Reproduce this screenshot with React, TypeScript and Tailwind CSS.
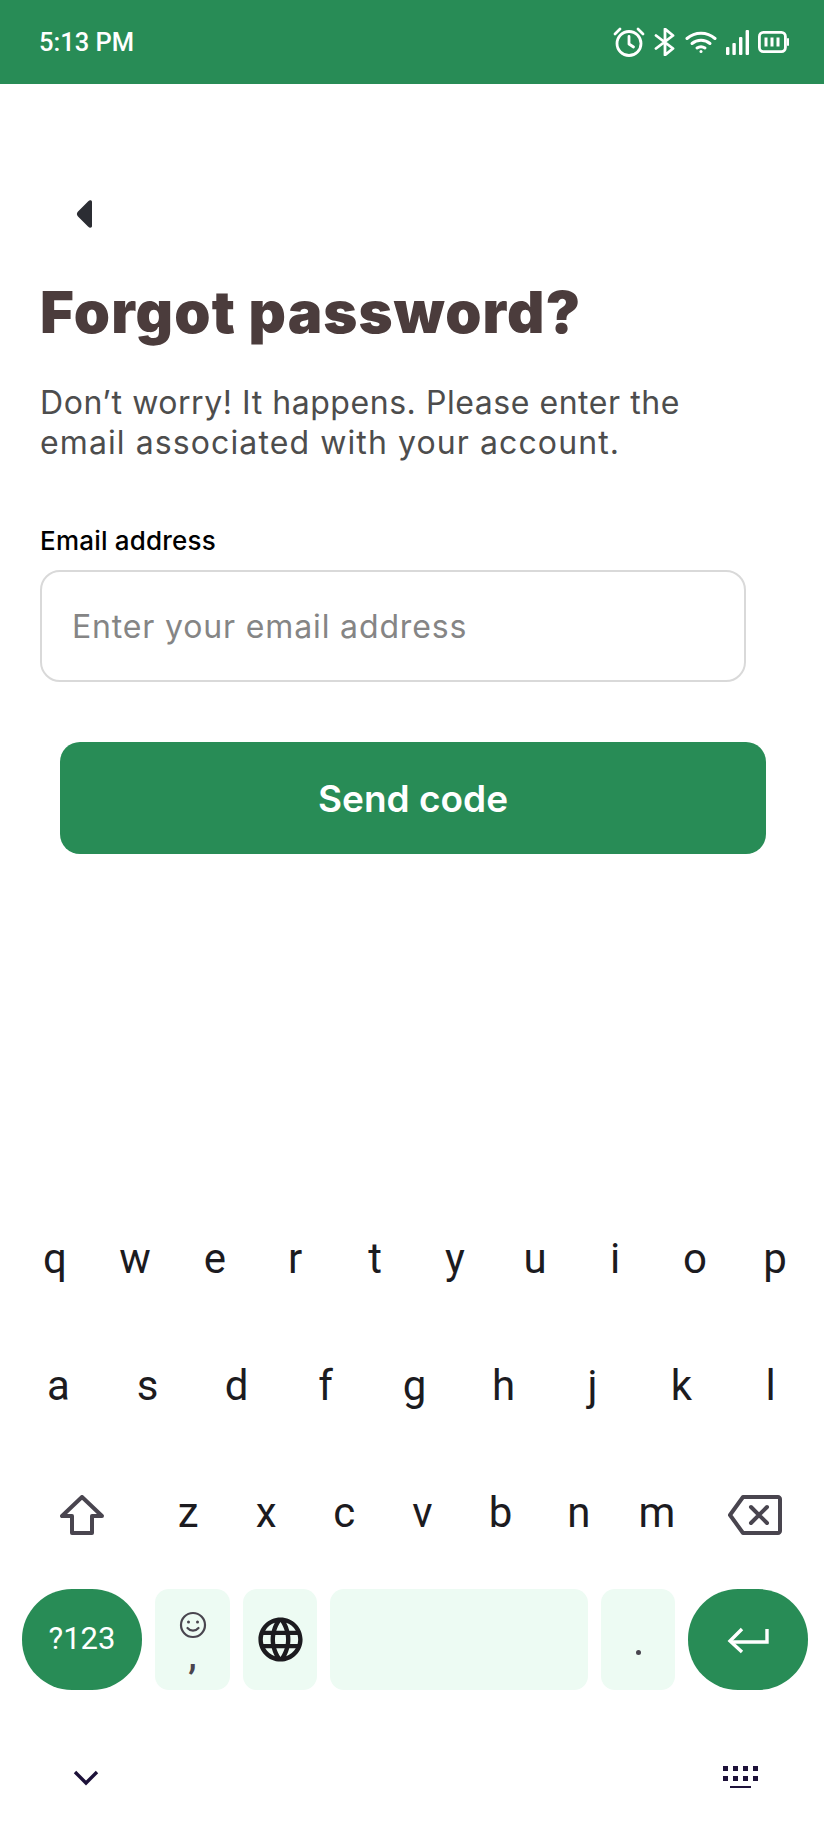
import React from "react";

const rowOne = ["q", "w", "e", "r", "t", "y", "u", "i", "o", "p"];
const rowTwo = ["a", "s", "d", "f", "g", "h", "j", "k", "l"];
const rowThree = ["z", "x", "c", "v", "b", "n", "m"];

const globePath =
  "M11.99 2C6.47 2 2 6.48 2 12s4.47 10 9.99 10C17.52 22 22 17.52 22 12S17.52 2 11.99 2zm6.93 6h-2.95c-.32-1.25-.78-2.45-1.38-3.56 1.84.63 3.37 1.91 4.33 3.56zM12 4.04c.83 1.2 1.48 2.53 1.91 3.96h-3.82c.43-1.43 1.08-2.76 1.91-3.96zM4.26 14C4.1 13.36 4 12.69 4 12s.1-1.36.26-2h3.38c-.08.66-.14 1.32-.14 2 0 .68.06 1.34.14 2H4.26zm.82 2h2.95c.32 1.25.78 2.45 1.38 3.56-1.84-.63-3.37-1.9-4.33-3.56zm2.95-8H5.08c.96-1.66 2.49-2.93 4.33-3.56C8.81 5.55 8.35 6.75 8.03 8zM12 19.96c-.83-1.2-1.48-2.53-1.91-3.96h3.82c-.43 1.43-1.08 2.76-1.91 3.96zM14.34 14H9.66c-.09-.66-.16-1.32-.16-2 0-.68.07-1.35.16-2h4.68c.09.65.16 1.32.16 2 0 .68-.07 1.34-.16 2zm.25 5.56c.6-1.11 1.06-2.31 1.38-3.56h2.95c-.96 1.65-2.49 2.93-4.33 3.56zM16.36 14c.08-.66.14-1.32.14-2 0-.68-.06-1.34-.14-2h3.38c.16.64.26 1.31.26 2s-.1 1.36-.26 2h-3.38z";

function StatusIcons() {
  return (
    <div className="flex items-center text-white">
      <svg width="32" height="30" viewBox="0 0 32 30" fill="none" stroke="currentColor" strokeWidth="2.8" strokeLinecap="round" strokeLinejoin="round">
        <circle cx="16" cy="16.5" r="12" />
        <path d="M16 9.5v7.5l4.5 3" />
        <path d="M2 7l5-5M30 7l-5-5" />
      </svg>
      <svg className="ml-[9px]" width="22" height="28" viewBox="0 0 22 28" fill="none" stroke="currentColor" strokeWidth="2.8" strokeLinecap="round" strokeLinejoin="round">
        <path d="M2 7.5l17 13-8 6.5V1l8 6.5-17 13" />
      </svg>
      <svg className="ml-[9px]" width="32" height="22" viewBox="0 0 32 22" fill="none" stroke="currentColor" strokeWidth="3" strokeLinecap="round">
        <path d="M2 7.5c8-7 20-7 28 0" />
        <path d="M7 12.5c5-4.2 13-4.2 18 0" />
        <path d="M12 17c2.4-1.6 5.6-1.6 8 0" />
        <circle cx="16" cy="20.5" r="1.5" fill="currentColor" stroke="none" />
      </svg>
      <svg className="ml-[8px]" width="25" height="25" viewBox="0 0 25 25" fill="currentColor">
        <rect x="1" y="17" width="3.4" height="8" rx="1" />
        <rect x="7.4" y="13" width="3.4" height="12" rx="1" />
        <rect x="14" y="7" width="3.4" height="18" rx="1" />
        <rect x="20.6" y="0" width="3.4" height="25" rx="1" />
      </svg>
      <svg className="ml-[8px]" width="31" height="22" viewBox="0 0 31 22" fill="none" stroke="currentColor">
        <rect x="1.4" y="1.4" width="26" height="19.2" rx="4" strokeWidth="2.8" />
        <path d="M30 8v6" strokeWidth="2" strokeLinecap="round" />
        <path d="M8 6.5v9M14 6.5v9M20 6.5v9" strokeWidth="3" />
      </svg>
    </div>
  );
}

function Letter({ label }: { label: string }) {
  return (
    <div className="flex-1 flex justify-center items-center h-full font-['Roboto',sans-serif] text-[42px] leading-none text-[#1c1b1f] pb-[4px]">
      {label}
    </div>
  );
}

export default function App() {
  return (
    <div className="w-[824px] h-[1834px] bg-white flex flex-col overflow-hidden">
      <div className="h-[84px] bg-[#288c56] flex items-center justify-between pl-[39px] pr-[35px] shrink-0">
        <span className="font-['Roboto',sans-serif] text-[25.500px] font-medium text-white">5:13 PM</span>
        <StatusIcons />
      </div>

      <div className="px-[40px]">
        <div className="mt-[116px] ml-[36px] h-[28px]">
          <svg width="17" height="28" viewBox="0 0 17 28" fill="#2b2d33">
            <path d="M12 1.500C14 -.5 16 .3 16 2v24c0 1.700-2 2.500-4 .5L2 16.500c-1.500-1.400-1.500-3.600 0-5z" />
          </svg>
        </div>
        <h1 className="mt-[46px] font-['Inter',sans-serif] font-black text-[58px] leading-[76px] tracking-[1.100px] text-[#4b3c3c] whitespace-nowrap">
          Forgot password?
        </h1>
        <p className="mt-[33px] font-['Inter',sans-serif] text-[32px] leading-[40px] tracking-[0.55px] text-[#4d4d4d] whitespace-nowrap">
          Don’t worry! It happens. Please enter the
          <br />
          <span className="tracking-[1.100px]">email associated with your account.</span>
        </p>
        <label className="block mt-[61px] font-['Inter',sans-serif] font-medium text-[26px] leading-[34px] tracking-[0.2px] text-black">
          Email address
        </label>
        <div className="mt-[12px] w-[706px] h-[112px] border-2 border-[#d9d9d9] rounded-[20px] flex items-center pl-[30px] pt-[2px] font-['Inter',sans-serif] text-[32px] tracking-[0.85px] text-[#858585]">
          Enter your email address
        </div>
        <button className="mt-[60px] ml-[20px] w-[706px] h-[112px] bg-[#288c56] rounded-[20px] flex items-center justify-center pt-[2px] font-['Inter',sans-serif] font-semibold text-[37px] text-white">
          Send code
        </button>
      </div>

      <div className="mt-auto pb-[41px]">
        <div className="flex h-[127px] pl-[15px] pr-[9px]">
          {rowOne.map((k) => (
            <Letter key={k} label={k} />
          ))}
        </div>
        <div className="flex h-[127px] pl-[14px] pr-[9px]">
          {rowTwo.map((k) => (
            <Letter key={k} label={k} />
          ))}
        </div>
        <div className="flex h-[127px] pl-[15px] pr-[9px]">
          <div className="w-[134px] flex justify-center items-center">
            <svg width="44" height="40" viewBox="0 0 44 40" fill="none" stroke="#49454f" strokeWidth="4" strokeLinejoin="round">
              <path d="M22 2L2 21h10v17h20V21h10z" />
            </svg>
          </div>
          {rowThree.map((k) => (
            <Letter key={k} label={k} />
          ))}
          <div className="w-[119px] flex justify-center items-center">
            <svg width="54" height="40" viewBox="0 0 54 40" fill="none" stroke="#49454f" strokeWidth="4" strokeLinejoin="round" strokeLinecap="round">
              <path d="M15 2h35c1 0 2 1 2 2v32c0 1-1 2-2 2H15L2 20z" />
              <path d="M23 12l16 16M39 12L23 28" />
            </svg>
          </div>
        </div>

        <div className="mt-[11px] h-[101px] pl-[22px] pr-[16px] flex gap-[13px]">
          <div className="w-[120px] rounded-[50px] bg-[#288c56] flex items-center justify-center font-['Roboto',sans-serif] text-[31px] text-white">
            ?123
          </div>
          <div className="w-[75px] rounded-[14px] bg-[#edfbf3] flex flex-col items-center pt-[22px]">
            <svg width="28" height="28" viewBox="0 0 28 28" fill="none" stroke="#49454f" strokeWidth="2.2" strokeLinecap="round">
              <circle cx="14" cy="14" r="12" />
              <circle cx="9.500" cy="11" r="1.500" fill="#49454f" stroke="none" />
              <circle cx="18.500" cy="11" r="1.500" fill="#49454f" stroke="none" />
              <path d="M8.500 17c3 3.500 8 3.500 11 0" />
            </svg>
            <span className="font-['Roboto',sans-serif] text-[38px] leading-[26px] mt-[3px] text-[#49454f] font-medium">,</span>
          </div>
          <div className="w-[74px] rounded-[14px] bg-[#edfbf3] flex items-center justify-center">
            <svg width="53" height="53" viewBox="0 0 24 24" fill="#1c1b1f">
              <path d={globePath} />
            </svg>
          </div>
          <div className="flex-1 rounded-[14px] bg-[#edfbf3]" />
          <div className="w-[74px] rounded-[14px] bg-[#edfbf3] flex items-center justify-center pt-[26px]">
            <div className="w-[5px] h-[5px] rounded-full bg-[#49454f]" />
          </div>
          <div className="w-[120px] rounded-[50px] bg-[#288c56] flex items-center justify-center">
            <svg width="42" height="28" viewBox="0 0 42 28" fill="none" stroke="white" strokeWidth="3.400">
              <path d="M40 3v13H4" />
              <path d="M15 3L3 15l12 11" />
            </svg>
          </div>
        </div>

        <div className="mt-[73px] h-[30px] flex items-center justify-between pl-[73px] pr-[65px]">
          <svg width="26" height="16" viewBox="0 0 26 16" fill="none" stroke="#1d1139" strokeWidth="3.400">
            <path d="M2 2l11 11L24 2" />
          </svg>
          <svg width="36" height="24" viewBox="0 0 36 24" fill="#1d1139">
            <rect x="0" y="0" width="5" height="5" />
            <rect x="10" y="0" width="5" height="5" />
            <rect x="20" y="0" width="5" height="5" />
            <rect x="30" y="0" width="5" height="5" />
            <rect x="0" y="10" width="5" height="5" />
            <rect x="10" y="10" width="5" height="5" />
            <rect x="20" y="10" width="5" height="5" />
            <rect x="30" y="10" width="5" height="5" />
            <rect x="7" y="20" width="21" height="2" />
          </svg>
        </div>
      </div>
    </div>
  );
}
